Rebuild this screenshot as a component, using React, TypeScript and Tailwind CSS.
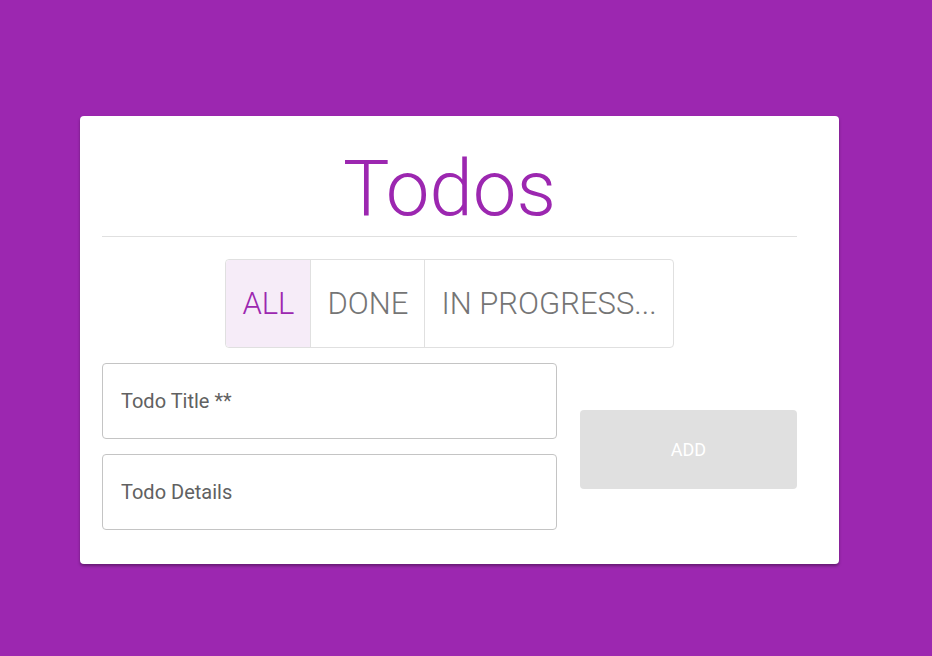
const font = { fontFamily: 'Roboto, "Open Sans", "Liberation Sans", sans-serif' };

function FilterTabs() {
  const tabs = ['ALL', 'DONE', 'IN PROGRESS...'];
  return (
    <div className="flex h-[89px] border border-[#e0e0e0] rounded">
      {tabs.map((tab, i) => (
        <button
          key={tab}
          className={`px-4 text-[31px] font-light leading-none ${
            i === 0 ? 'bg-[#f6ecf8] text-[#9c27b0] rounded-l' : 'text-[#757575] border-l border-[#e0e0e0]'
          }`}
        >
          {tab}
        </button>
      ))}
    </div>
  );
}

export default function App() {
  return (
    <div className="min-h-screen bg-[#9c27b0] pt-[116px] pb-[92px]" style={font}>
      <div className="ml-[80px] w-[759px] bg-white rounded shadow-[0_2px_3px_rgba(0,0,0,0.35)] pl-[22px] pr-[42px] pb-[34px]">
        <div className="h-[121px] flex items-end justify-center border-b border-[#e0e0e0]">
          <h1 className="text-[78px] font-light leading-none text-[#9c27b0] pb-[8px]">Todos</h1>
        </div>
        <div className="flex justify-center mt-[22px]">
          <FilterTabs />
        </div>
        <div className="flex items-center gap-[23px] mt-[15px]">
          <div className="flex flex-col gap-[15px] w-[455px]">
            <input
              placeholder="Todo Title **"
              className="h-[76px] px-[18px] text-[20px] border border-[#c4c4c4] rounded placeholder:text-[#616161] outline-none"
            />
            <input
              placeholder="Todo Details"
              className="h-[76px] px-[18px] text-[20px] border border-[#c4c4c4] rounded placeholder:text-[#616161] outline-none"
            />
          </div>
          <button className="mt-[6px] w-[217px] h-[79px] bg-[#e0e0e0] rounded text-white text-[18px]">
            ADD
          </button>
        </div>
      </div>
    </div>
  );
}
